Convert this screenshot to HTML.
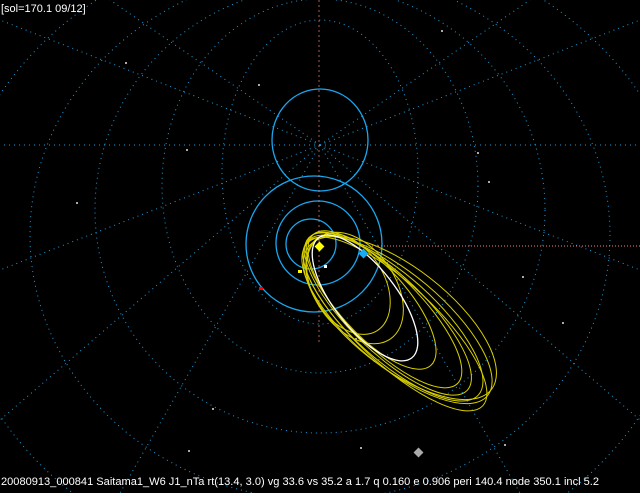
<!DOCTYPE html>
<html><head><meta charset="utf-8"><style>
html,body{margin:0;padding:0;background:#000;width:640px;height:493px;overflow:hidden}
svg{display:block}
text{font-family:"Liberation Sans",sans-serif;fill:#fff}
</style></head><body>
<svg width="640" height="493" viewBox="0 0 640 493" xmlns="http://www.w3.org/2000/svg">
<rect width="640" height="493" fill="#000"/>
<g fill="none" stroke="#1a9ee0" stroke-width="1" stroke-dasharray="1 4">
<ellipse cx="320" cy="172" rx="98" ry="152"/>
<ellipse cx="320" cy="186" rx="158" ry="187"/>
<ellipse cx="320" cy="210" rx="225" ry="223"/>
<ellipse cx="320" cy="235" rx="290" ry="265"/>
<ellipse cx="320" cy="255" rx="370" ry="320"/>
<line x1="320" y1="145" x2="0" y2="145"/>
<line x1="320" y1="145" x2="640" y2="145"/>
<line x1="320" y1="145" x2="0" y2="20"/>
<line x1="320" y1="145" x2="640" y2="20"/>
<line x1="320" y1="145" x2="110" y2="0"/>
<line x1="320" y1="145" x2="530" y2="0"/>
<line x1="320" y1="145" x2="0" y2="270"/>
<line x1="320" y1="145" x2="640" y2="270"/>
<line x1="320" y1="145" x2="0" y2="420"/>
<line x1="320" y1="145" x2="640" y2="420"/>
<line x1="320" y1="145" x2="120" y2="493"/>
<line x1="320" y1="145" x2="520" y2="493"/>
</g>
<g fill="none" stroke="#1aa8f0" stroke-width="1.3">
<ellipse cx="320" cy="140" rx="48" ry="51"/>
<circle cx="314" cy="244" r="68"/>
<circle cx="318" cy="243" r="42"/>
<circle cx="311" cy="244" r="25"/>
</g>
<g stroke="#f08080" stroke-width="1" stroke-dasharray="1 2">
<line x1="360" y1="246" x2="640" y2="246"/>
<line x1="319" y1="0" x2="319" y2="345" stroke-dasharray="2 3" opacity="0.7"/>
</g>
<g fill="none" stroke="#d8d000" stroke-width="1">
<ellipse cx="393" cy="318" rx="115" ry="42" transform="rotate(42 393 318)"/>
<ellipse cx="397" cy="320" rx="118" ry="46" transform="rotate(40 397 320)"/>
<ellipse cx="388" cy="314" rx="110" ry="38" transform="rotate(44 388 314)"/>
<ellipse cx="400" cy="318" rx="116" ry="50" transform="rotate(38 400 318)"/>
<ellipse cx="384" cy="310" rx="104" ry="36" transform="rotate(45 384 310)"/>
<ellipse cx="395" cy="324" rx="120" ry="40" transform="rotate(43 395 324)"/>
<ellipse cx="355" cy="288" rx="62" ry="40" transform="rotate(55 355 288)"/>
<ellipse cx="348" cy="284" rx="55" ry="36" transform="rotate(58 348 284)"/>
<ellipse cx="372" cy="300" rx="88" ry="34" transform="rotate(48 372 300)"/>
</g>
<ellipse cx="365" cy="298" rx="76" ry="31" transform="rotate(52 365 298)" fill="none" stroke="#fff" stroke-width="1.3"/>
<rect x="316" y="243" width="7" height="7" fill="#ffff00" transform="rotate(45 319.5 246.5)"/>
<rect x="360" y="250" width="7" height="7" fill="#1aa8f0" transform="rotate(45 363.5 253.5)"/>
<rect x="298" y="270" width="4" height="3" fill="#ff0"/>
<rect x="324" y="265" width="3" height="3" fill="#fff"/>
<rect x="259" y="287" width="4" height="3" fill="#f00"/>
<rect x="415" y="449" width="7" height="7" fill="#aaa" transform="rotate(45 418.5 452.5)"/>
<g fill="#aaa">
<rect x="125" y="62" width="2" height="2"/><rect x="441" y="30" width="2" height="2"/><rect x="258" y="84" width="2" height="2"/>
<rect x="186" y="149" width="2" height="2"/><rect x="477" y="152" width="2" height="2"/><rect x="76" y="202" width="2" height="2"/>
<rect x="522" y="276" width="2" height="2"/><rect x="212" y="408" width="2" height="2"/><rect x="188" y="450" width="2" height="2"/>
<rect x="360" y="447" width="2" height="2"/><rect x="504" y="444" width="2" height="2"/>
<rect x="488" y="181" width="2" height="2"/><rect x="562" y="322" width="2" height="2"/><rect x="355" y="338" width="2" height="2"/>
</g>
<text x="1" y="12" font-size="11">[sol=170.1 09/12]</text>
<text x="1" y="485" font-size="11.3" textLength="598" lengthAdjust="spacingAndGlyphs">20080913_000841 Saitama1_W6 J1_nTa rt(13.4, 3.0) vg 33.6 vs 35.2 a 1.7 q 0.160 e 0.906 peri 140.4 node 350.1 incl 5.2</text>
</svg>
</body></html>
